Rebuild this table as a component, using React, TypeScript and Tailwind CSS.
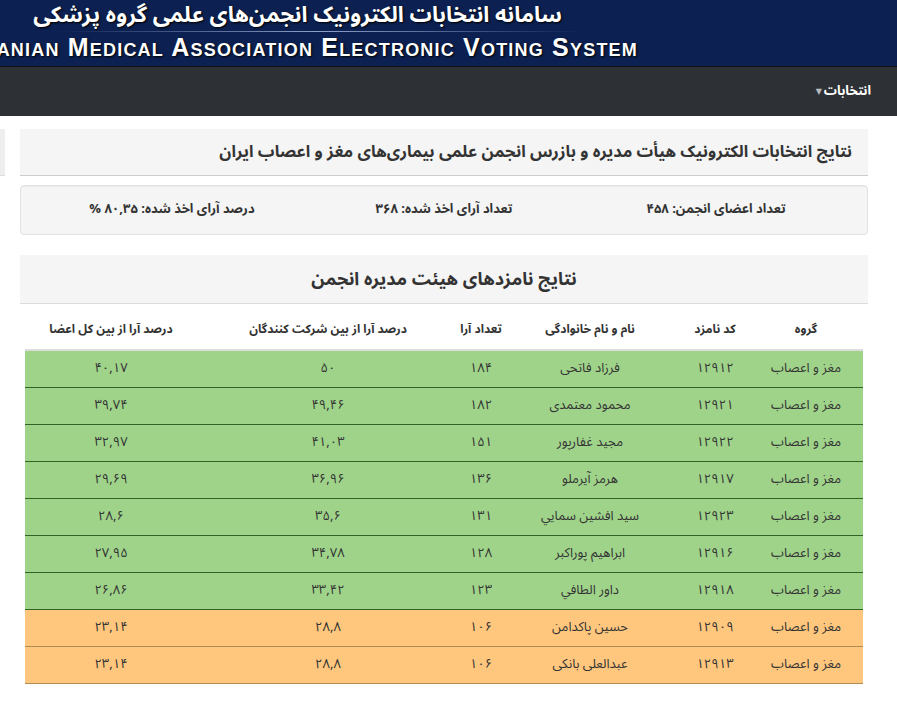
const rows = [
  { code: '۱۲۹۱۲', name: 'فرزاد فاتحی', votes: '۱۸۴', p1: '۵۰', p2: '۴۰,۱۷', win: true },
  { code: '۱۲۹۲۱', name: 'محمود معتمدی', votes: '۱۸۲', p1: '۴۹,۴۶', p2: '۳۹,۷۴', win: true },
  { code: '۱۲۹۲۲', name: 'مجید غفارپور', votes: '۱۵۱', p1: '۴۱,۰۳', p2: '۳۲,۹۷', win: true },
  { code: '۱۲۹۱۷', name: 'هرمز آیرملو', votes: '۱۳۶', p1: '۳۶,۹۶', p2: '۲۹,۶۹', win: true },
  { code: '۱۲۹۲۳', name: 'سید افشین سمايي', votes: '۱۳۱', p1: '۳۵,۶', p2: '۲۸,۶', win: true },
  { code: '۱۲۹۱۶', name: 'ابراهیم پوراکبر', votes: '۱۲۸', p1: '۳۴,۷۸', p2: '۲۷,۹۵', win: true },
  { code: '۱۲۹۱۸', name: 'داور الطافي', votes: '۱۲۳', p1: '۳۳,۴۲', p2: '۲۶,۸۶', win: true },
  { code: '۱۲۹۰۹', name: 'حسین پاکدامن', votes: '۱۰۶', p1: '۲۸,۸', p2: '۲۳,۱۴', win: false },
  { code: '۱۲۹۱۳', name: 'عبدالعلی بانکی', votes: '۱۰۶', p1: '۲۸,۸', p2: '۲۳,۱۴', win: false },
];

const cols = 'grid grid-cols-[102px_92px_158px_60px_246px_180px]';

export default function App() {
  return (
    <div dir="rtl" className="min-h-screen w-full bg-white text-[#333] font-['Noto_Sans_Arabic','DejaVu_Sans',sans-serif]">
      {/* Banner */}
      <header className="h-[67px] overflow-hidden border-b border-[#111] bg-[#0c2151]">
        <div className="mr-[257px] w-[640px] text-right">
          <div className="whitespace-nowrap pr-[78px] text-[22px] font-bold leading-[31px] text-white [text-shadow:1px_1px_2px_#000]">
            سامانه انتخابات الکترونیک انجمن‌های علمی گروه پزشکی
          </div>
          <div className="mr-[60px] h-px w-[520px] bg-gradient-to-l from-transparent via-[#8da0c8] to-transparent" />
          <div className="whitespace-nowrap pr-[2px] text-right font-['Liberation_Sans',sans-serif] text-[25px] font-bold leading-[31px] tracking-[1.2px] text-white [font-variant:small-caps] [text-shadow:1px_1px_2px_#000]">
            <span dir="ltr">Iranian Medical Association Electronic Voting System</span>
          </div>
        </div>
      </header>

      {/* Navbar */}
      <nav className="flex h-[49px] items-center bg-[#2d3035] pr-[26px]">
        <span className="text-[13px] font-bold text-white">انتخابات</span>
        <span className="mr-[2px] text-[8px] text-[#bbb]">▼</span>
      </nav>

      <div className="flex pt-[13px]">
        <main className="mr-[29px] w-[848px]">
          <div className="flex h-[47px] items-center border-b border-[#ccc] bg-[#f5f5f5] pr-[16px]">
            <h1 className="text-[16.5px] font-bold text-[#333]">
              نتایج انتخابات الکترونیک هیأت مدیره و بازرس انجمن علمی بیماری‌های مغز و اعصاب ایران
            </h1>
          </div>

          <div className="mt-[9px] grid h-[50px] grid-cols-3 items-center rounded border border-[#e3e3e3] bg-[#f5f5f5] text-[13px] font-bold shadow-[inset_0_1px_1px_rgba(0,0,0,0.05)]">
            <div className="pr-[20px] text-center">تعداد اعضای انجمن: ۴۵۸</div>
            <div className="text-center">تعداد آرای اخذ شده: ۳۶۸</div>
            <div className="pl-[20px] text-center">درصد آرای اخذ شده: ۸۰,۳۵ %</div>
          </div>

          <div className="mt-[20px] flex h-[49px] items-center justify-center border-b border-[#ddd] bg-[#f5f5f5]">
            <h2 className="text-[18px] font-bold text-[#333]">نتایج نامزدهای هیئت مدیره انجمن</h2>
          </div>

          <div className="mx-[5px] text-center">
            <div className={`${cols} h-[47px] items-center border-b-2 border-[#ddd] pt-[7px] text-[12px] font-bold`}>
              <div className="pr-[12px]">گروه</div>
              <div>کد نامزد</div>
              <div>نام و نام خانوادگی</div>
              <div>تعداد آرا</div>
              <div>درصد آرا از بین شرکت کنندگان</div>
              <div className="pr-[8px]">درصد آرا از بین کل اعضا</div>
            </div>
            {rows.map((r) => (
              <div
                key={r.code}
                className={`${cols} h-[37px] items-center border-b text-[13px] ${
                  r.win ? 'border-[#2f6424] bg-[#9fd38a]' : 'border-[#b08c55] bg-[#ffc77e]'
                }`}
              >
                <div className="pr-[12px]">مغز و اعصاب</div>
                <div>{r.code}</div>
                <div>{r.name}</div>
                <div>{r.votes}</div>
                <div>{r.p1}</div>
                <div className="pr-[8px]">{r.p2}</div>
              </div>
            ))}
          </div>
        </main>
        <div className="mr-[15px] w-[5px]">
          <div className="h-[47px] bg-[#eee] border-b border-[#ddd]" />
        </div>
      </div>
    </div>
  );
}
